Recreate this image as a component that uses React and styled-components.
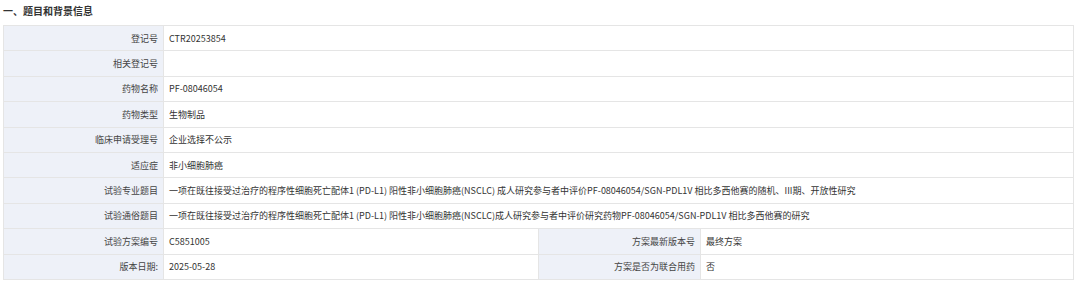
import React from "react";
import styled, { createGlobalStyle } from "styled-components";

const Global = createGlobalStyle`
  html, body { margin: 0; padding: 0; background: #fff; }
  body { font-family: "Microsoft YaHei", "Noto Sans CJK SC", "Liberation Sans", sans-serif; }
`;

const Page = styled.div`
  width: 1080px;
  height: 283px;
  overflow: hidden;
  padding: 0 6px 0 3px;
  box-sizing: border-box;
`;

const Title = styled.h3`
  margin: 0;
  height: 25px;
  line-height: 21px;
  font-size: 10px;
  font-weight: 700;
  color: #333;
`;

const Table = styled.table`
  width: 1071px;
  border-collapse: collapse;
  table-layout: fixed;
  font-size: 9px;
  color: #333;
`;

const Row = styled.tr`
  height: 25.4px;
`;

const Label = styled.th`
  background: #eef1f8;
  border: 1px solid #e5e5e5;
  font-weight: 400;
  text-align: right;
  padding: 0 5px 0 4px;
  color: #444;
  white-space: nowrap;
`;

const Value = styled.td`
  background: #fff;
  border: 1px solid #e5e5e5;
  text-align: left;
  padding: 0 4px 0 5px;
  white-space: nowrap;
  overflow: hidden;
`;

const rows = [
  ["登记号", "CTR20253854"],
  ["相关登记号", ""],
  ["药物名称", "PF-08046054"],
  ["药物类型", "生物制品"],
  ["临床申请受理号", "企业选择不公示"],
  ["适应症", "非小细胞肺癌"],
  [
    "试验专业题目",
    "一项在既往接受过治疗的程序性细胞死亡配体1 (PD-L1) 阳性非小细胞肺癌(NSCLC) 成人研究参与者中评价PF-08046054/SGN-PDL1V 相比多西他赛的随机、III期、开放性研究",
  ],
  [
    "试验通俗题目",
    "一项在既往接受过治疗的程序性细胞死亡配体1 (PD-L1) 阳性非小细胞肺癌(NSCLC)成人研究参与者中评价研究药物PF-08046054/SGN-PDL1V 相比多西他赛的研究",
  ],
];

const pairs = [
  ["试验方案编号", "C5851005", "方案最新版本号", "最终方案"],
  ["版本日期:", "2025-05-28", "方案是否为联合用药", "否"],
];

export default function App() {
  return (
    <Page>
      <Global />
      <Title>一、题目和背景信息</Title>
      <Table>
        <colgroup>
          <col style={{ width: 160 }} />
          <col style={{ width: 375 }} />
          <col style={{ width: 162 }} />
          <col />
        </colgroup>
        <tbody>
          {rows.map(([k, v]) => (
            <Row key={k}>
              <Label>{k}</Label>
              <Value colSpan={3}>{v}</Value>
            </Row>
          ))}
          {pairs.map(([k1, v1, k2, v2]) => (
            <Row key={k1}>
              <Label>{k1}</Label>
              <Value>{v1}</Value>
              <Label>{k2}</Label>
              <Value>{v2}</Value>
            </Row>
          ))}
        </tbody>
      </Table>
    </Page>
  );
}
